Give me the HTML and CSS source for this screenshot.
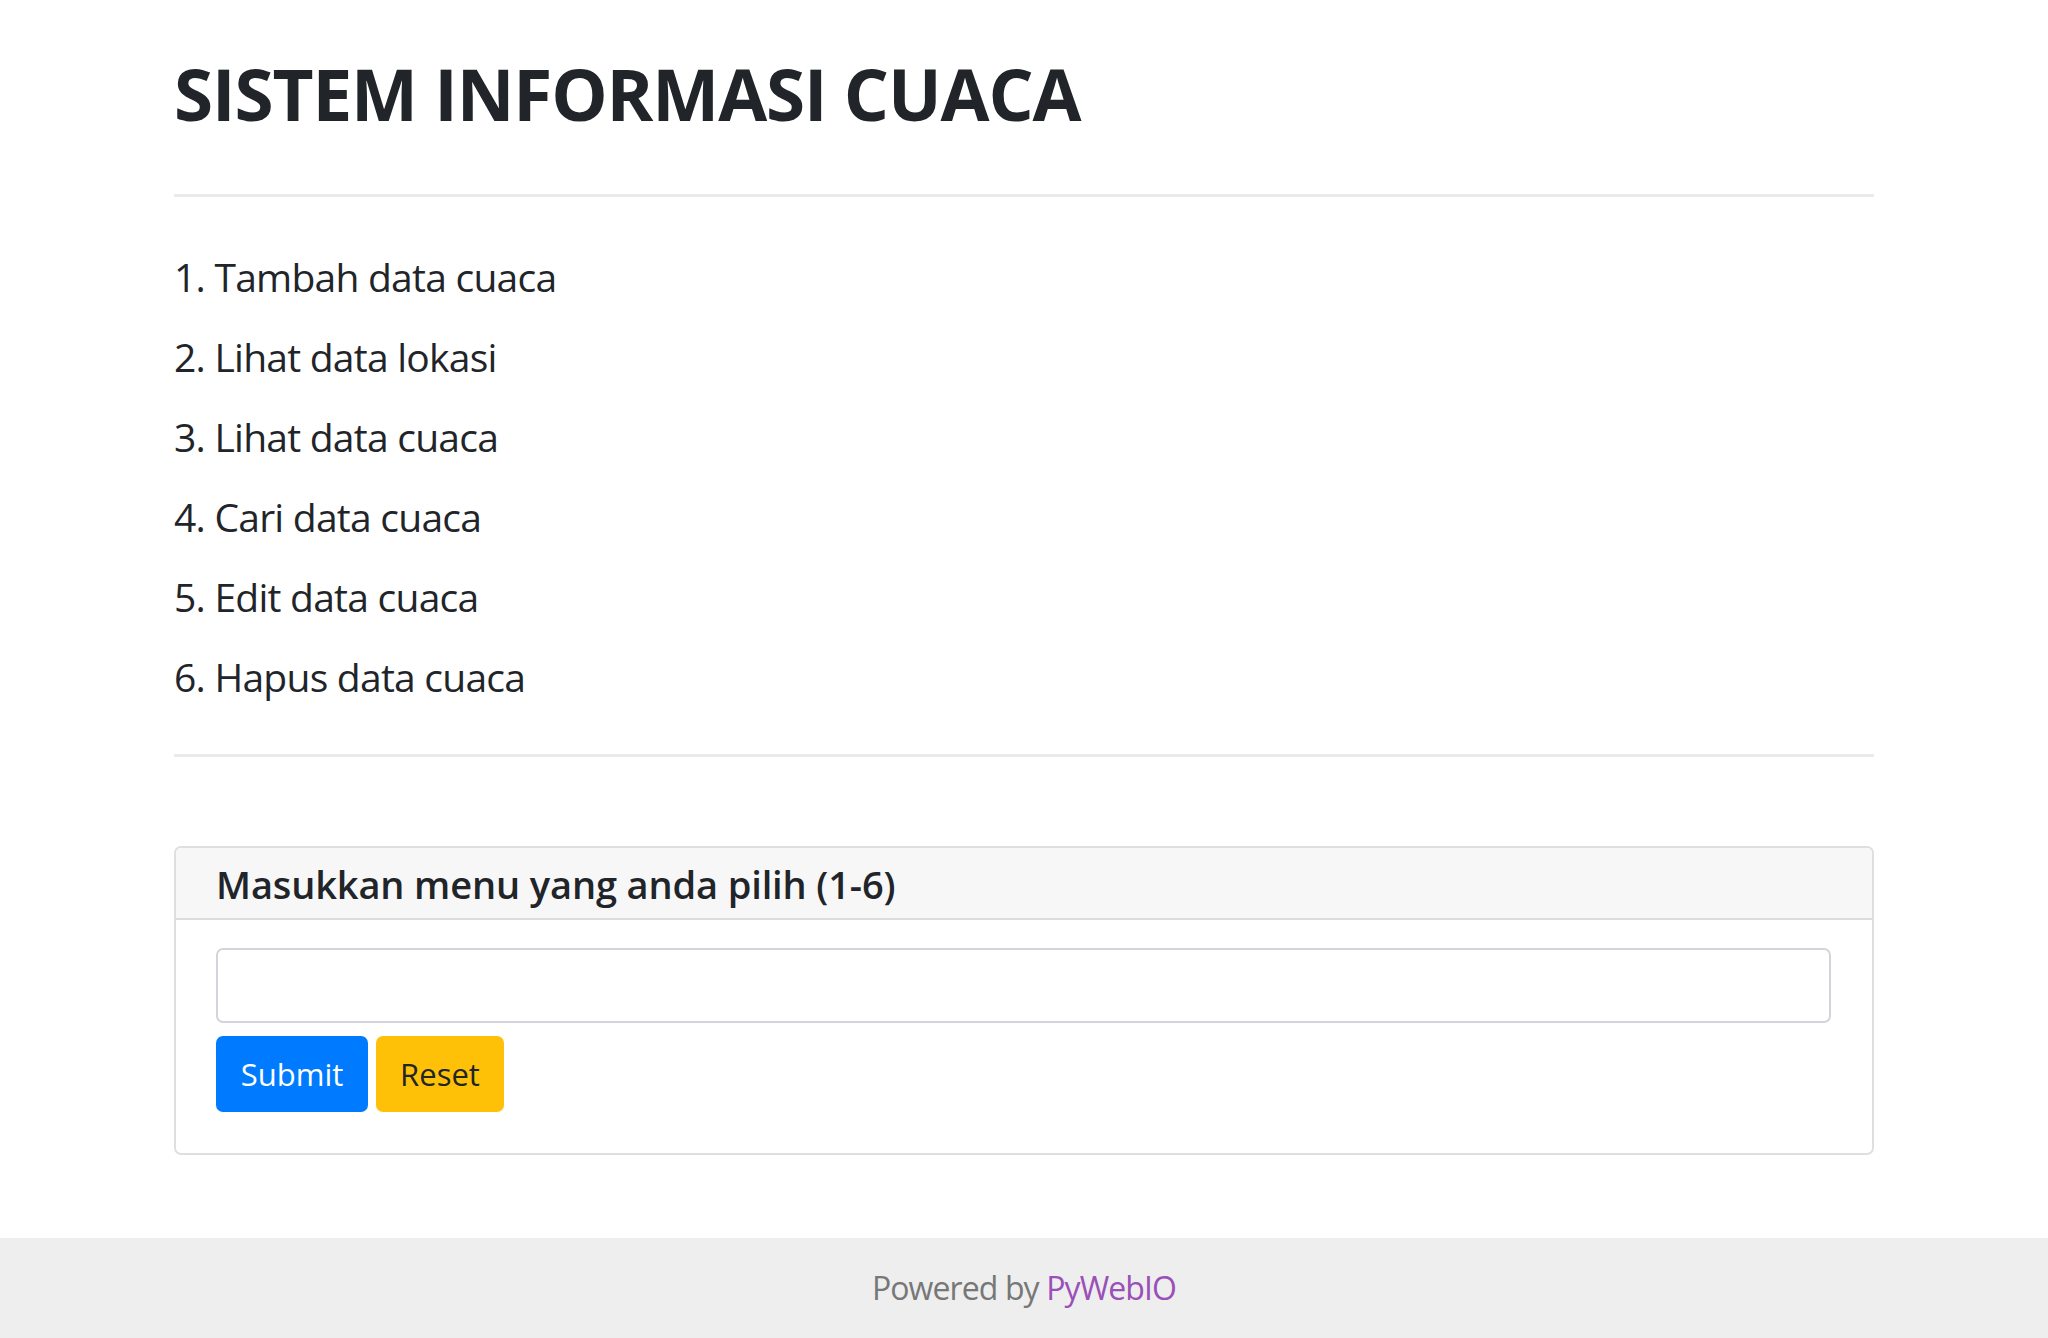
FILE: index.html
```html
<!DOCTYPE html>
<html lang="id">
<head>
<meta charset="utf-8">
<title>Sistem Informasi Cuaca</title>
<link rel="stylesheet" href="styles.css">
</head>
<body>
<main class="container">
  <h1 class="title">SISTEM INFORMASI CUACA</h1>
  <hr class="rule">
  <div class="menu">
    <p class="menu-item">1. Tambah data cuaca</p>
    <p class="menu-item">2. Lihat data lokasi</p>
    <p class="menu-item">3. Lihat data cuaca</p>
    <p class="menu-item">4. Cari data cuaca</p>
    <p class="menu-item">5. Edit data cuaca</p>
    <p class="menu-item">6. Hapus data cuaca</p>
  </div>
  <hr class="rule rule-bottom">
  <form class="card">
    <div class="card-header">Masukkan menu yang anda pilih (1-6)</div>
    <div class="card-body">
      <input class="input" type="text">
      <div class="actions">
        <button type="button" class="btn btn-primary">Submit</button>
        <button type="reset" class="btn btn-warning">Reset</button>
      </div>
    </div>
  </form>
</main>
<footer class="footer">Powered by <a class="footer-link" href="#">PyWebIO</a></footer>
</body>
</html>
```
FILE: styles.css
```css
html, body {
  margin: 0;
  padding: 0;
  background: #ffffff;
}
body {
  font-family: "Open Sans", "Noto Sans", "Liberation Sans", sans-serif;
  color: #212529;
  min-height: 1338px;
  display: flex;
  flex-direction: column;
}
.container {
  width: 1700px;
  margin: 0 auto 0 174px;
  padding-top: 51px;
  flex: 1;
}
.title {
  margin: 0;
  font-size: 71px;
  line-height: 85px;
  font-weight: 700;
  letter-spacing: -1.1px;
}
.rule {
  border: 0;
  height: 3px;
  background: #e9eaec;
  margin: 58px 0 0;
}
.menu {
  padding-top: 50px;
}
.menu-item {
  margin: 0 0 20px;
  font-size: 39px;
  line-height: 60px;
  letter-spacing: -0.75px;
}
.rule-bottom {
  margin-top: 47px;
}
.card {
  margin-top: 89px;
  border: 2px solid #dfdfdf;
  border-radius: 7px;
  overflow: hidden;
}
.card-header {
  background: #f7f7f7;
  border-bottom: 2px solid #dcdcdc;
  height: 67px;
  padding: 3px 40px 0;
  font-size: 38px;
  line-height: 67px;
  font-weight: 600;
  letter-spacing: -0.13px;
}
.card-body {
  padding: 28px 40px 41px;
}
.input {
  display: block;
  box-sizing: border-box;
  width: 1615px;
  height: 75px;
  border: 2px solid #d2d6db;
  border-radius: 7px;
  margin: 0;
  font-size: 32px;
}
.actions {
  display: flex;
  gap: 8px;
  margin-top: 13px;
}
.btn {
  font-family: inherit;
  height: 76px;
  border: 0;
  border-radius: 7px;
  font-size: 31px;
  padding: 0 24px;
  cursor: pointer;
}
.btn-primary {
  width: 152px;
  background: #007bff;
  color: #ffffff;
}
.btn-warning {
  width: 128px;
  background: #ffc107;
  color: #212529;
}
.footer {
  height: 100px;
  background: #eeeeee;
  color: #777777;
  text-align: center;
  font-size: 32px;
  line-height: 100px;
  letter-spacing: -0.9px;
}
.footer-link {
  color: #9b4fb8;
  text-decoration: none;
}
```
